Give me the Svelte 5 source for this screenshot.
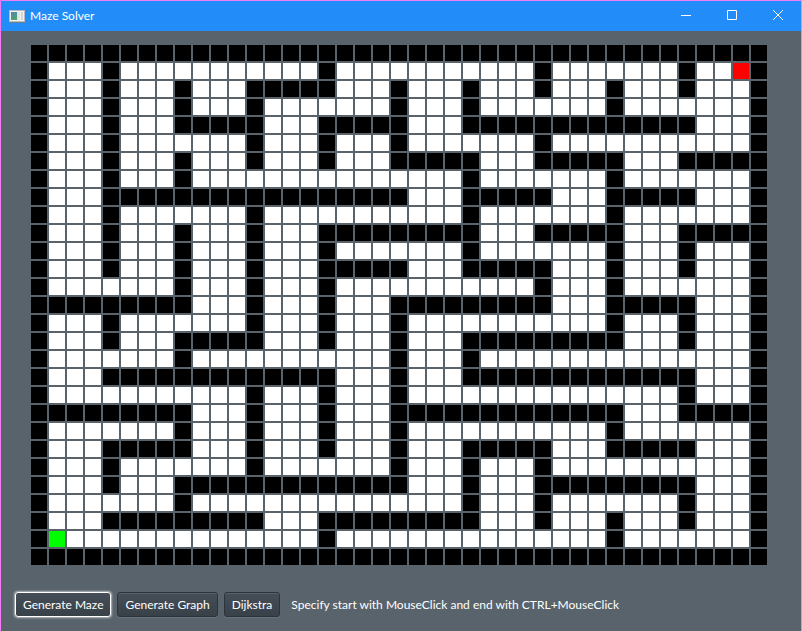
<script>
  const COLUMNS = 41;

  // Wall cells of every row, as single columns or inclusive ranges.
  const wallRows = [
    '0-40',
    '0 4 16 28 36 40',
    '0 4 8 12-16 20 24 28 32 36 40',
    '0 4 8 12 20 24 32 40',
    '0 4 8-12 16-20 24-36 40',
    '0 4 12 16 20 28 40',
    '0 4 8 12 16 20-24 28-32 36-40',
    '0 4 8 24 32 40',
    '0 4-20 24-28 32-36 40',
    '0 4 12 24 32 40',
    '0 4 8 12 16-24 28-32 36-40',
    '0 4 8 12 16 24 32 36 40',
    '0 4 8 12 16-20 24-28 32 36 40',
    '0 8 12 16 28 32 40',
    '0-8 12 16 20-28 32-36 40',
    '0 4 12 16 20 32 36 40',
    '0 4 8-12 16 20 24-32 36 40',
    '0 8 20 24 40',
    '0 4-16 20 24-36 40',
    '0 12 16 20 36 40',
    '0-8 12 16 20-32 36-40',
    '0 8 12 16 20 32 40',
    '0 4-8 12 16 20 24-28 32-36 40',
    '0 4 12 20 24 28 40',
    '0 4 8-20 24 28-36 40',
    '0 8 24 28 36 40',
    '0 4-12 16-24 28 32 36 40',
    '0 16 32 40',
    '0-40'
  ];

  let start = $state({ row: 27, column: 1 });
  let end = $state({ row: 1, column: 39 });

  const grid = wallRows.map((row) => {
    const cells = Array(COLUMNS).fill(false);
    for (const part of row.split(' ')) {
      const [from, to = from] = part.split('-').map(Number);
      cells.fill(true, from, to + 1);
    }
    return cells;
  });

  function place(event, row, column) {
    if (grid[row][column]) return;
    if (event.ctrlKey) end = { row, column };
    else start = { row, column };
  }
</script>

<div class="window">
  <header>
    <svg class="app-icon" viewBox="0 0 16 14" aria-hidden="true">
      <defs>
        <linearGradient id="pane" x1="0" y1="0" x2="0.4" y2="1">
          <stop offset="0" stop-color="#4f86b4" />
          <stop offset="1" stop-color="#4fa172" />
        </linearGradient>
      </defs>
      <rect x="0.5" y="1.5" width="15" height="11" fill="#f2f2f0" stroke="#b9bcbe" />
      <path d="M0 13.5h16" stroke="#6f7f91" />
      <rect x="2" y="3" width="6" height="8" fill="url(#pane)" />
      <rect x="8" y="3" width="3" height="8" fill="#e3e4e5" />
      <rect x="12" y="3" width="2" height="8" fill="#d2d4d6" />
    </svg>
    <h1>Maze Solver</h1>
    <div class="controls">
      <button aria-label="Minimize">
        <svg viewBox="0 0 12 12"><path d="M1 6.5h10" /></svg>
      </button>
      <button aria-label="Maximize">
        <svg viewBox="0 0 12 12"><path d="M1.5 1.5h9v9h-9z" /></svg>
      </button>
      <button aria-label="Close">
        <svg viewBox="0 0 12 12"><path d="M1 1l10 10M11 1L1 11" /></svg>
      </button>
    </div>
  </header>

  <main>
    <div class="maze" style:--columns={COLUMNS}>
      {#each grid as cells, row}
        {#each cells as wall, column}
          <!-- svelte-ignore a11y_click_events_have_key_events, a11y_no_static_element_interactions -->
          <div
            class="cell"
            class:wall
            class:start={start.row === row && start.column === column}
            class:end={end.row === row && end.column === column}
            onclick={(event) => place(event, row, column)}
          ></div>
        {/each}
      {/each}
    </div>

    <div class="toolbar">
      <button class="action focused">Generate Maze</button>
      <button class="action">Generate Graph</button>
      <button class="action">Dijkstra</button>
      <p>Specify start with MouseClick and end with CTRL+MouseClick</p>
    </div>
  </main>
</div>

<style>
  :global(body) {
    margin: 0;
    background: #59636b;
  }

  .window {
    box-sizing: border-box;
    min-height: 100vh;
    border: 1px solid #f47cf6;
    border-bottom: 0;
    background: #59636b;
    color: #fff;
    font: 12px/16px Lato, "Open Sans", sans-serif;
  }

  header {
    display: flex;
    align-items: center;
    height: 30px;
    padding-left: 8px;
    background: #228df8;
  }

  .app-icon {
    width: 16px;
    height: 14px;
  }

  h1 {
    flex: 1;
    margin: 0 0 0 5px;
    font: inherit;
  }

  .controls {
    display: flex;
    height: 100%;
  }

  .controls button {
    display: grid;
    place-items: center;
    width: 46px;
    padding: 0 0 2px;
    border: 0;
    background: none;
  }

  .controls svg {
    width: 12px;
    height: 12px;
    fill: none;
    stroke: #fff;
  }

  main {
    padding: 14px;
  }

  .maze {
    display: grid;
    grid-template-columns: repeat(var(--columns), 16px);
    grid-auto-rows: 16px;
    gap: 2px;
    margin-left: 16px;
  }

  .cell {
    background: #fff;
  }

  .wall {
    background: #000;
  }

  .start {
    background: #0f0;
  }

  .end {
    background: #f00;
  }

  .toolbar {
    display: flex;
    align-items: center;
    gap: 6px;
    margin-top: 27px;
  }

  .action {
    height: 25px;
    padding: 0 7px;
    border: 1px solid #2c333b;
    border-radius: 3px;
    background: linear-gradient(#464f58, #384048);
    box-shadow: inset 0 1px #56606a, 0 1px 1px #6a747c;
    color: #fff;
    font: inherit;
    white-space: nowrap;
  }

  .focused {
    border-color: #fff;
    box-shadow: 0 0 2px 1px #ffffff90;
  }

  p {
    margin: 0 0 0 5px;
  }
</style>
